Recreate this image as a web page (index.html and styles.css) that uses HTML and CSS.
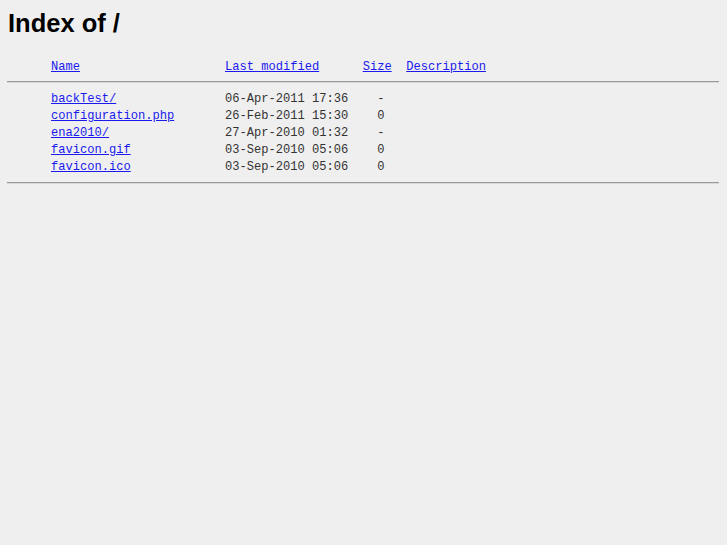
FILE: index.html
```html
<!DOCTYPE html>
<html>
<head>
<meta charset="UTF-8">
<title>Index of /</title>
<link rel="stylesheet" href="styles.css">
</head>
<body>
<h1 class="title">Index of /</h1>
<pre class="listing"><span class="ico"></span><a href="?C=N;O=D">Name</a>                    <a href="?C=M;O=A">Last modified</a>      <a href="?C=S;O=A">Size</a>  <a href="?C=D;O=A">Description</a><hr class="rule"><span class="ico"></span><a href="backTest/">backTest/</a>               06-Apr-2011 17:36    -   
<span class="ico"></span><a href="configuration.php">configuration.php</a>       26-Feb-2011 15:30    0   
<span class="ico"></span><a href="ena2010/">ena2010/</a>                27-Apr-2010 01:32    -   
<span class="ico"></span><a href="favicon.gif">favicon.gif</a>             03-Sep-2010 05:06    0   
<span class="ico"></span><a href="favicon.ico">favicon.ico</a>             03-Sep-2010 05:06    0   
<hr class="rule rule-end"></pre>
</body>
</html>
```

FILE: styles.css
```css
html, body {
    margin: 0;
    padding: 0;
    background: #efefef;
}
body {
    padding: 8px 8px 8px 7px;
    color: #000;
}
.title {
    margin: 0;
    font-family: "Liberation Sans", Arial, sans-serif;
    font-size: 25.5px;
    font-weight: bold;
    line-height: 30px;
    padding-left: 1px;
}
.listing {
    margin: 21px 0 0 0;
    font-family: "Liberation Mono", "Courier New", monospace;
    font-size: 12.08px;
    line-height: 17px;
    color: #333;
}
.listing a {
    color: #1a1aee;
    text-decoration: underline;
}
.ico {
    display: inline-block;
    width: 44px;
}
.rule {
    margin: 5px 0 8px 0;
    height: 0;
    border: 0;
    border-top: 1px solid #9a9a9a;
    border-bottom: 1px solid #d8d8d8;
}
.rule-end {
    margin-top: 6px;
}
```
